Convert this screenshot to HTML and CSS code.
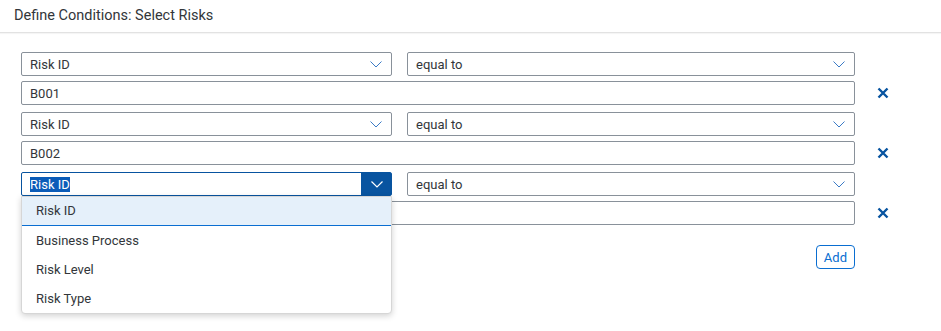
FILE: index.html
```html
<!DOCTYPE html>
<html lang="en">
<head>
    <meta charset="UTF-8">
    <meta name="viewport" content="width=device-width, initial-scale=1.0">
    <title>Define Conditions</title>
    <link rel="stylesheet" href="styles.css">
</head>
<body>

<header class="dialog-header">
    <h1 class="dialog-title">Define Conditions: Select Risks</h1>
</header>

<main class="conditions">
    <div class="condition">
        <div class="combo">
            <span class="combo-value">Risk ID</span>
            <span class="combo-arrow"><svg width="12" height="7" viewBox="0 0 12 7"><path d="M0.5 0.5 L6 6 L11.5 0.5" fill="none" stroke="#3b7bc6" stroke-width="1"/></svg></span>
        </div>
        <div class="combo">
            <span class="combo-value">equal to</span>
            <span class="combo-arrow"><svg width="12" height="7" viewBox="0 0 12 7"><path d="M0.5 0.5 L6 6 L11.5 0.5" fill="none" stroke="#3b7bc6" stroke-width="1"/></svg></span>
        </div>
        <div class="field">B001</div>
        <button class="remove" title="Remove"><svg width="12" height="12" viewBox="0 0 12 12"><path d="M1.5 1.5 L10.5 10.5 M10.5 1.5 L1.5 10.5" stroke="#0854a0" stroke-width="2.4"/></svg></button>
    </div>

    <div class="condition">
        <div class="combo">
            <span class="combo-value">Risk ID</span>
            <span class="combo-arrow"><svg width="12" height="7" viewBox="0 0 12 7"><path d="M0.5 0.5 L6 6 L11.5 0.5" fill="none" stroke="#3b7bc6" stroke-width="1"/></svg></span>
        </div>
        <div class="combo">
            <span class="combo-value">equal to</span>
            <span class="combo-arrow"><svg width="12" height="7" viewBox="0 0 12 7"><path d="M0.5 0.5 L6 6 L11.5 0.5" fill="none" stroke="#3b7bc6" stroke-width="1"/></svg></span>
        </div>
        <div class="field">B002</div>
        <button class="remove" title="Remove"><svg width="12" height="12" viewBox="0 0 12 12"><path d="M1.5 1.5 L10.5 10.5 M10.5 1.5 L1.5 10.5" stroke="#0854a0" stroke-width="2.4"/></svg></button>
    </div>

    <div class="condition">
        <div class="combo combo-open">
            <span class="combo-value"><span class="picked">Risk ID</span></span>
            <span class="combo-arrow"><svg width="12" height="7" viewBox="0 0 12 7"><path d="M0.5 0.5 L6 6 L11.5 0.5" fill="none" stroke="#fff" stroke-width="1.2"/></svg></span>
            <ul class="combo-list">
                <li class="combo-item active">Risk ID</li>
                <li class="combo-item">Business Process</li>
                <li class="combo-item">Risk Level</li>
                <li class="combo-item">Risk Type</li>
            </ul>
        </div>
        <div class="combo">
            <span class="combo-value">equal to</span>
            <span class="combo-arrow"><svg width="12" height="7" viewBox="0 0 12 7"><path d="M0.5 0.5 L6 6 L11.5 0.5" fill="none" stroke="#3b7bc6" stroke-width="1"/></svg></span>
        </div>
        <div class="field"></div>
        <button class="remove" title="Remove"><svg width="12" height="12" viewBox="0 0 12 12"><path d="M1.5 1.5 L10.5 10.5 M10.5 1.5 L1.5 10.5" stroke="#0854a0" stroke-width="2.4"/></svg></button>
    </div>

    <div class="actions">
        <button class="add-btn">Add</button>
    </div>
</main>

</body>
</html>
```

FILE: styles.css
```css
* {
    margin: 0;
    padding: 0;
    box-sizing: border-box;
}

html, body {
    height: 100%;
    overflow: hidden;
    background: #fff;
    color: #32363a;
    font-family: Roboto, "Liberation Sans", sans-serif;
    font-size: 13px;
}

.dialog-header {
    height: 33px;
    padding-left: 14px;
    border-bottom: 1px solid #e2e2e2;
    box-shadow: 0 1px 1px rgba(0, 0, 0, 0.04);
}

.dialog-title {
    font-size: 14.5px;
    font-weight: normal;
    line-height: 31px;
    color: #32363a;
}

.conditions {
    padding: 19px 0 0 21px;
    width: 925px;
}

.condition {
    display: grid;
    grid-template-columns: 371px 448px 56px;
    column-gap: 15px;
    row-gap: 5px;
    margin-bottom: 7px;
}

.combo,
.field {
    height: 24px;
    border: 1px solid #89919a;
    border-radius: 2px;
    background: #fff;
    display: flex;
    align-items: center;
}

.combo {
    position: relative;
}

.combo-value {
    flex: 1;
    padding-left: 8px;
    white-space: nowrap;
}

.combo-arrow {
    width: 30px;
    height: 100%;
    display: flex;
    align-items: center;
    justify-content: center;
}

.field {
    grid-column: 1 / 3;
    padding-left: 8px;
}

.remove {
    grid-column: 3;
    grid-row: 2;
    justify-self: start;
    align-self: center;
    margin-left: 7px;
    width: 12px;
    height: 12px;
    border: none;
    background: none;
    display: flex;
}

.combo-open {
    border-color: #0854a0;
    z-index: 2;
}

.combo-open .combo-arrow {
    background: #0854a0;
    border-left: 1px solid #0854a0;
}

.picked {
    background: #0b5cb8;
    color: #fff;
}

.combo-list {
    list-style: none;
    position: absolute;
    top: 23px;
    left: -1px;
    right: -1px;
    background: #fff;
    border: 1px solid #d6d6d6;
    border-radius: 0 0 4px 4px;
    box-shadow: 0 2px 6px rgba(0, 0, 0, 0.18);
}

.combo-item {
    height: 29px;
    line-height: 29px;
    padding-left: 14px;
    color: #32363a;
}

.combo-item.active {
    background: #e5f0fa;
    border-bottom: 1px solid #0a6ed1;
    line-height: 28px;
}

.actions {
    display: flex;
    justify-content: flex-end;
    width: 834px;
    margin-top: 20px;
}

.add-btn {
    height: 24px;
    padding: 0 7px;
    border: 1px solid #0a6ed1;
    border-radius: 4px;
    background: #fff;
    color: #0a6ed1;
    font-family: inherit;
    font-size: 13px;
}
```
